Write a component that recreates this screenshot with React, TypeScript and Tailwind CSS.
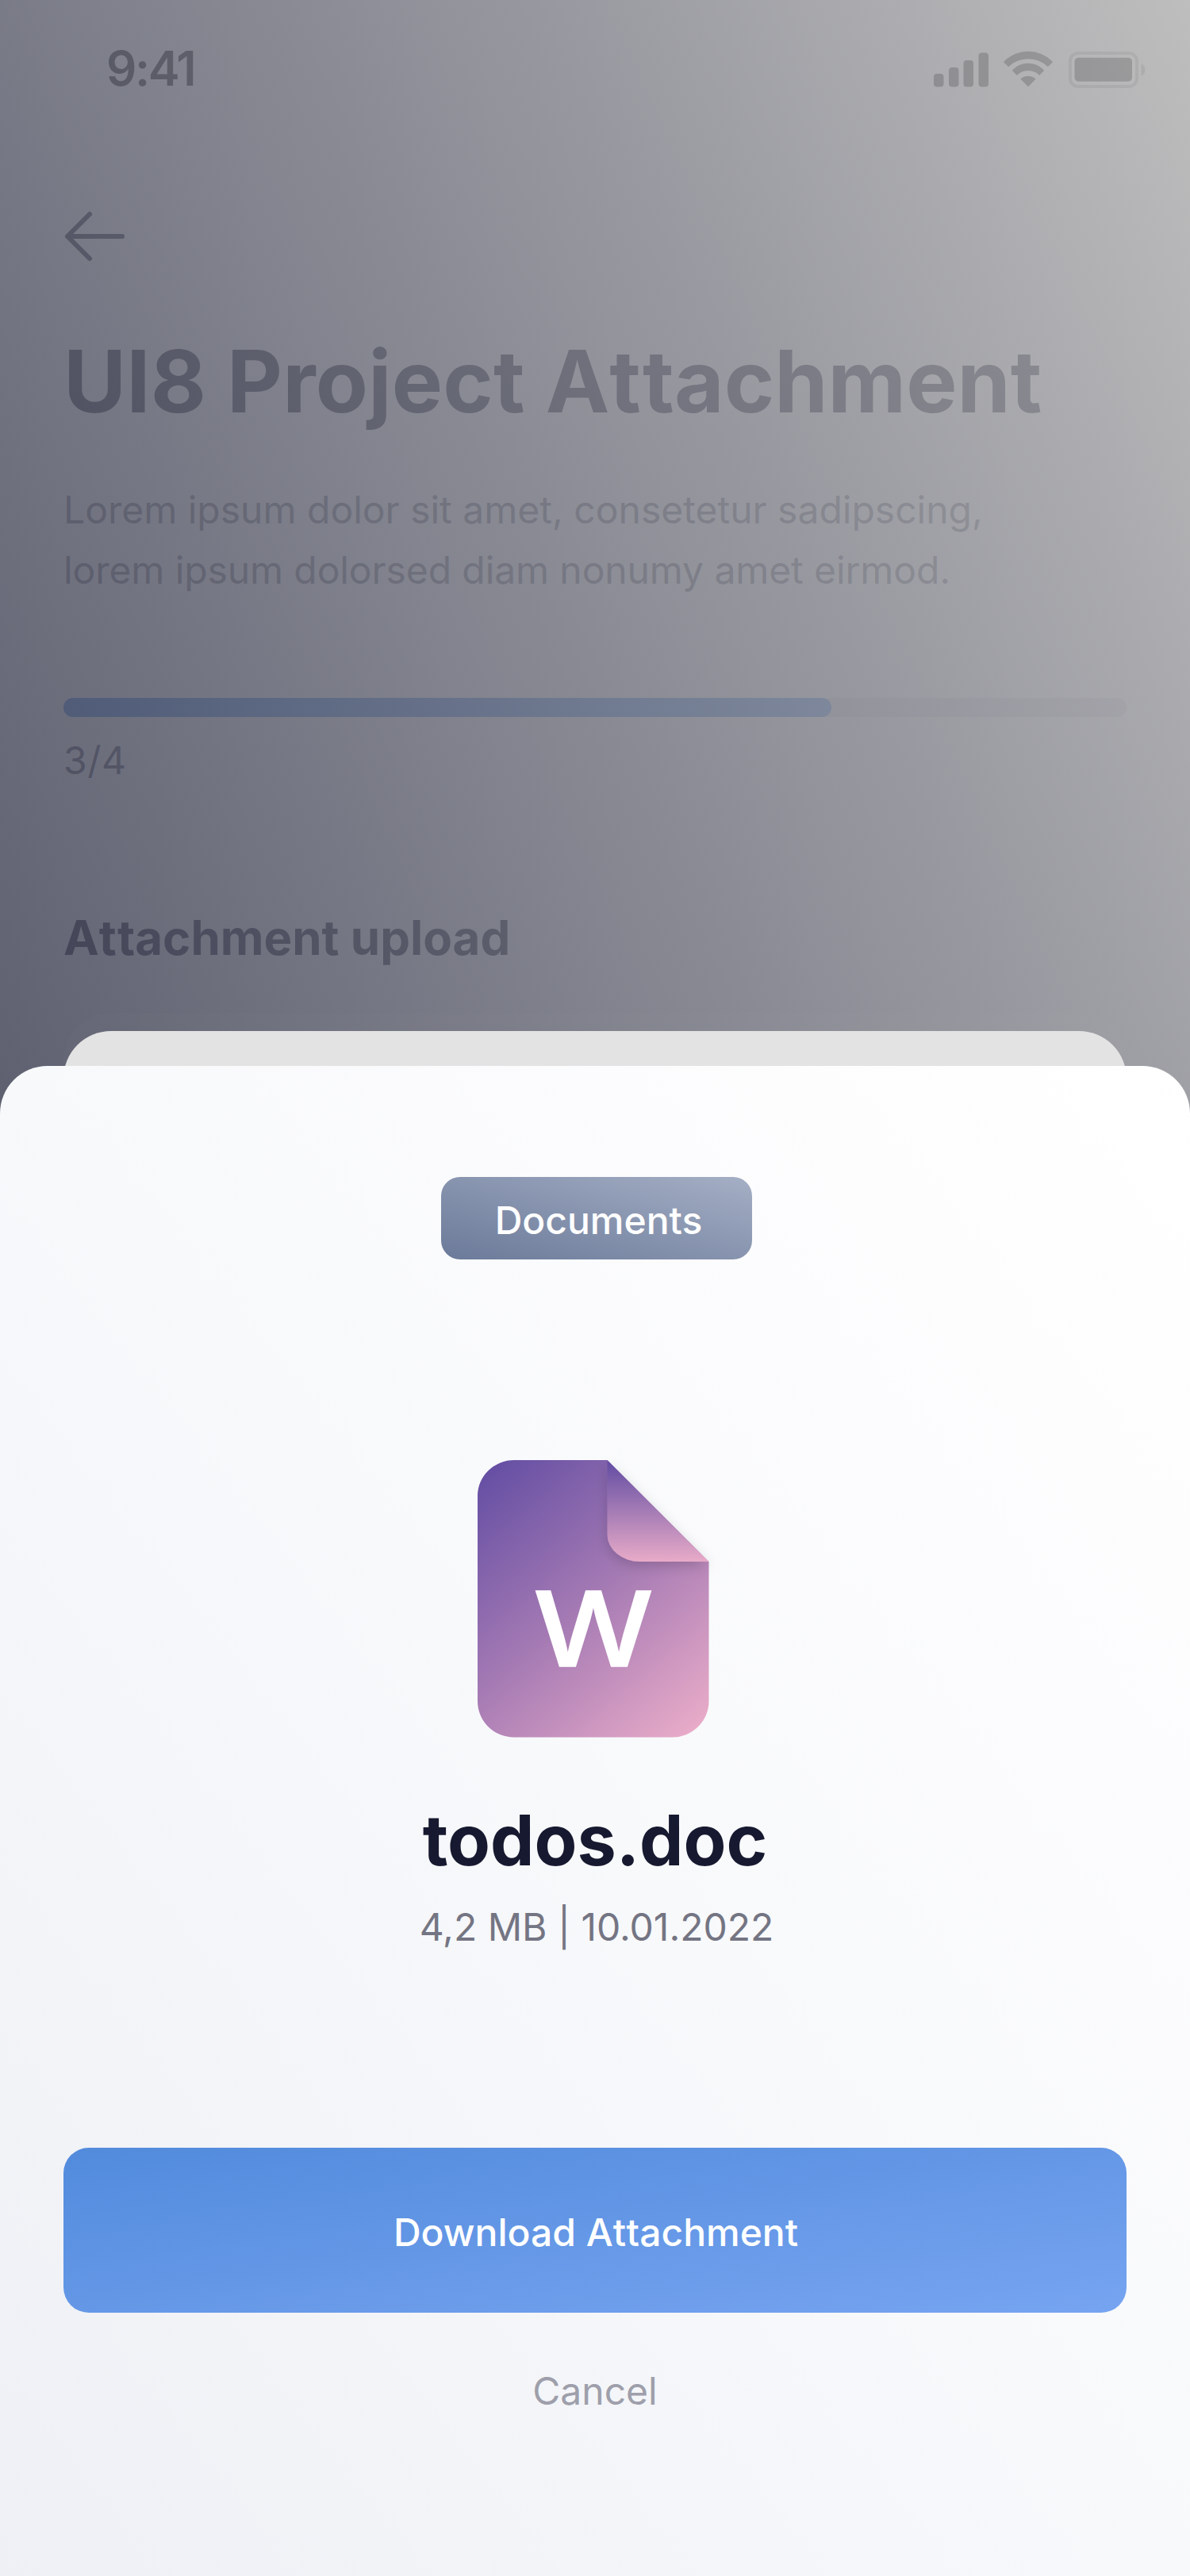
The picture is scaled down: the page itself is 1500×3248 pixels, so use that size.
function StatusBar() {
  return (
    <header className="flex h-[60px] items-center justify-between pr-[56px] pl-[134px]">
      <span className="text-[60px] leading-[60px] font-semibold tracking-[-0.04em] text-black">9:41</span>
      <svg width="268" height="48" viewBox="0 0 268 48" className="mt-[4px] text-black opacity-80">
        <g fill="currentColor">
          <rect x="1" y="29" width="12.5" height="16.5" rx="4" />
          <rect x="20" y="21" width="12.5" height="24.5" rx="4" />
          <rect x="38.5" y="12" width="12.5" height="33.5" rx="4" />
          <rect x="57.5" y="2.500" width="12.500" height="43" rx="4" />
        </g>
        <g transform="translate(120 45.300)" fill="currentColor">
          <path d="M0 0 L-9 -9 Q-9.800 -10 -8.500 -10.800 A15 15 0 0 1 8.500 -10.800 Q9.800 -10 9 -9 Z" />
          <path d="M-14 -14.300 L-19.500 -19.600 Q-20.300 -20.600 -19.300 -21.600 A27.500 27.500 0 0 1 19.300 -21.600 Q20.300 -20.600 19.500 -19.600 L14 -14.300 A19.500 19.500 0 0 0 -14 -14.300 Z" />
          <path d="M-24.800 -25 L-30.300 -30.300 Q-31.200 -31 -30.300 -32 A43 43 0 0 1 30.300 -32 Q31.200 -31 30.300 -30.300 L24.800 -25 A35.500 35.500 0 0 0 -24.800 -25 Z" />
        </g>
        <rect x="173" y="3" width="84" height="42" rx="10" fill="none" stroke="currentColor" strokeWidth="4" opacity="0.350" />
        <rect x="178.500" y="8.800" width="72.500" height="30" rx="5" fill="currentColor" />
        <path d="M262.500 16 V32 A9 9 0 0 0 262.500 16 Z" fill="currentColor" opacity="0.400" />
      </svg>
    </header>
  );
}

function FileIcon() {
  return (
    <svg width="292" height="350" viewBox="0 0 292 350" className="mt-[253px] mr-[4px] overflow-visible">
      <defs>
        <linearGradient id="page" gradientUnits="userSpaceOnUse" x1="10" y1="20" x2="280" y2="335">
          <stop offset="0" stopColor="#6750a4" />
          <stop offset="0.500" stopColor="#a67bb4" />
          <stop offset="1" stopColor="#e8abc8" />
        </linearGradient>
        <linearGradient id="fold" x1="0" y1="0" x2="0" y2="1">
          <stop offset="0.050" stopColor="#6750a4" />
          <stop offset="1" stopColor="#e8abc8" />
        </linearGradient>
        <filter id="shade" x="-30%" y="-30%" width="160%" height="160%">
          <feDropShadow dx="0" dy="6" stdDeviation="8" floodColor="#000000" floodOpacity="0.160" />
        </filter>
      </defs>
      <path d="M46 0 H163.500 L291.500 128 V304 A46 45.500 0 0 1 245 349.500 H46 A46 45.500 0 0 1 0 304 V45 A46 45 0 0 1 46 0 Z" fill="url(#page)" />
      <path d="M163.500 0 L291.500 128 H205 A41.500 34 0 0 1 163.500 94 Z" fill="url(#fold)" filter="url(#shade)" />
      <text x="70" y="260" textLength="152" lengthAdjust="spacingAndGlyphs" fontSize="131" fontWeight="500" fill="#ffffff" stroke="#ffffff" strokeWidth="1.500">W</text>
    </svg>
  );
}

function AttachmentPage() {
  return (
    <div className="h-full bg-linear-to-tr from-[#eff0f5] to-white pt-[56px]">
      <StatusBar />
      <main className="px-[80px] pt-[148px]">
        <svg width="80" height="68" viewBox="0 0 80 68" fill="none" stroke="#171930" strokeWidth="6" strokeLinecap="round" strokeLinejoin="round">
          <path d="M33 6 L5 34 L33 62 M6 34 H74" />
        </svg>
        <h1 className="mt-[89px] text-[108px] leading-[120px] font-bold whitespace-nowrap text-[#171930]">
          <span className="tracking-[0.002em]">UI8 Project </span>A<span className="tracking-[0.020em]">t</span>tachment
        </h1>
        <p className="mt-[64px] text-[48px] leading-[76px] whitespace-nowrap text-[#747583]">
          Lorem ipsum dolor sit amet, consetetur sadipscing,
          <br />
          <span className="tracking-[-0.002em]">lorem ipsum dolorsed diam nonumy amet eirmod.</span>
        </p>
        <div className="mt-[123px] h-6 rounded-xl bg-[#e0e0e8]">
          <div className="h-full w-[968px] rounded-xl bg-linear-to-r from-[#4080e0] to-[#5c94e8]" />
        </div>
        <p className="mt-[25px] text-[48px] leading-[60px] tracking-[0.01em] text-[#4b4c5e]">3/4</p>
        <h2 className="mt-[157px] text-[60px] leading-[72px] font-bold text-[#171930]">
          A<span className="tracking-[0.020em]">t</span>tachment upload
        </h2>
        <div className="mt-[59px] h-[400px] rounded-[60px] bg-white" />
      </main>
    </div>
  );
}

function DownloadSheet() {
  return (
    <section className="absolute inset-x-0 bottom-0 flex h-[1948px] flex-col">
      <div className="mx-[80px] -mb-[60px] h-[104px] shrink-0 rounded-t-[60px] bg-[#e3e3e3]" />
      <div className="flex flex-1 flex-col items-center rounded-t-[60px] bg-linear-to-tr from-[#eef0f5] via-[#f8f9fb] to-white px-[80px] pt-[140px]">
        <span className="ml-[4px] flex h-[104px] w-[392px] items-center justify-center rounded-3xl bg-linear-to-tr from-[#6b7a99] to-[#a5afc5] pt-[5px] pl-[5px] text-[48px] font-medium text-white">
          Documents
        </span>
        <FileIcon />
        <h3 className="mt-[77px] text-[88px] leading-[104px] font-bold text-[#171930]">todos.doc</h3>
        <p className="mt-[28px] ml-[4px] text-[48px] leading-[60px] text-[#747583]">4,2 MB | 10.01.2022</p>
        <button className="mt-[248px] h-[208px] w-full rounded-[32px] bg-linear-to-br from-[#528bdc] to-[#76a4f1] pt-[5px] pl-[2px] text-[48px] font-medium text-white">
          Download A<span className="tracking-[0.01em]">t</span>tachment
        </button>
        <button className="mt-[69px] text-[48px] leading-[60px] text-[#9e9fab]">Cancel</button>
      </div>
    </section>
  );
}

export default function App() {
  return (
    <div className="relative h-[3248px] w-[1500px] overflow-hidden font-['Inter',sans-serif]">
      <AttachmentPage />
      <div className="absolute inset-0 bg-linear-to-tr from-[#1f2138] to-[#b2b2b2] opacity-[0.85]" />
      <DownloadSheet />
    </div>
  );
}
